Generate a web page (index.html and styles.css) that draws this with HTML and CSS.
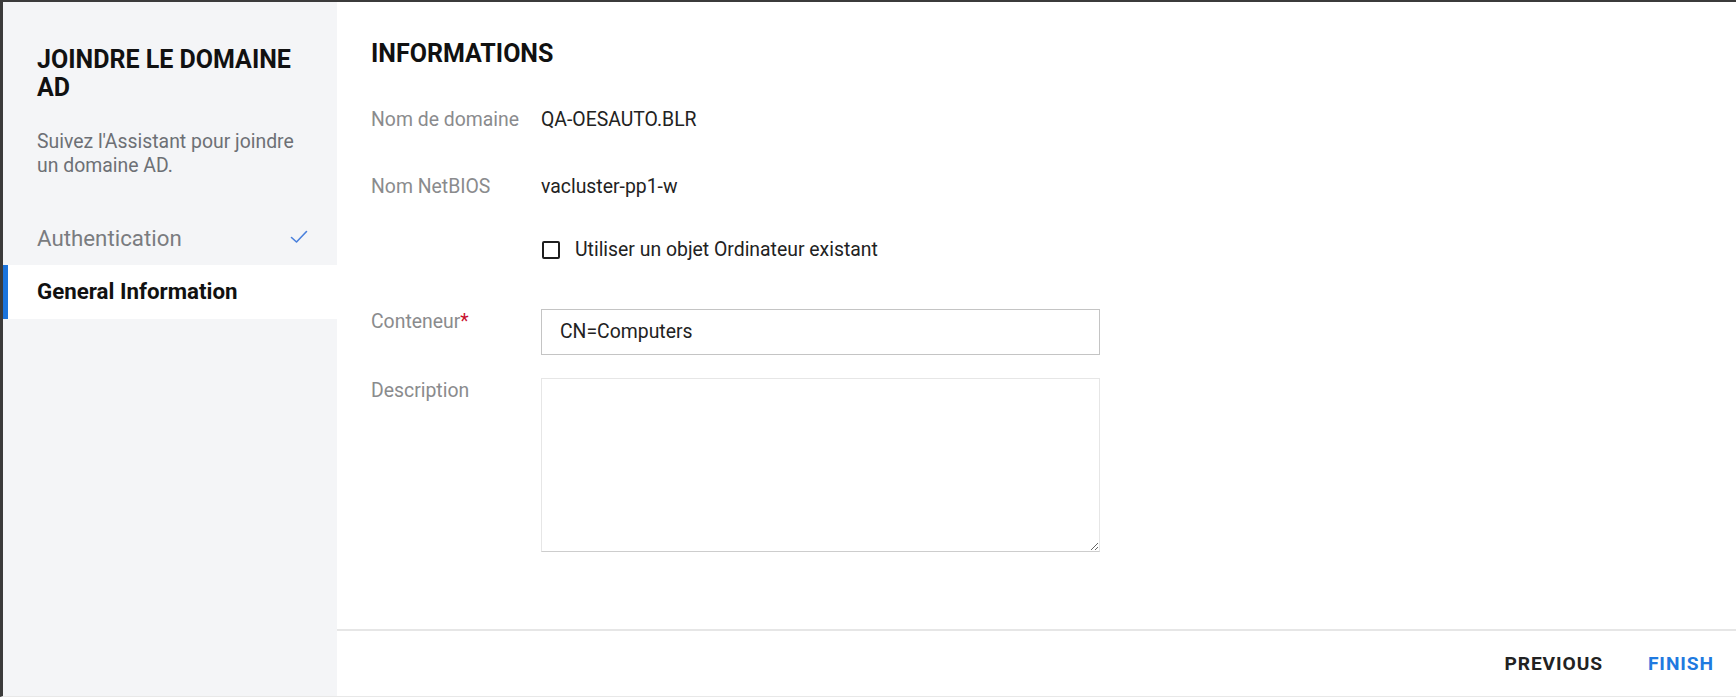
FILE: index.html
```html
<!DOCTYPE html>
<html lang="fr">
<head>
<meta charset="utf-8">
<title>Joindre le domaine AD</title>
<link rel="stylesheet" href="styles.css">
</head>
<body>
<div class="frame">
  <aside class="sidebar">
    <h1 class="side-title">JOINDRE LE DOMAINE AD</h1>
    <p class="side-desc">Suivez l'Assistant pour joindre un domaine AD.</p>
    <ul class="steps">
      <li class="step step-done">
        <span>Authentication</span>
        <svg class="check" width="18" height="14" viewBox="0 0 18 14"><path d="M1.5 7.5 L6.5 12 L16.5 1.5" fill="none" stroke="#4a80dc" stroke-width="1.6" stroke-linecap="round" stroke-linejoin="round"/></svg>
      </li>
      <li class="step step-active"><span>General Information</span></li>
    </ul>
  </aside>
  <main class="main">
    <section class="content">
      <h2 class="heading">INFORMATIONS</h2>
      <div class="row row-domain">
        <span class="label">Nom de domaine</span>
        <span class="value">QA-OESAUTO.BLR</span>
      </div>
      <div class="row row-netbios">
        <span class="label">Nom NetBIOS</span>
        <span class="value">vacluster-pp1-w</span>
      </div>
      <div class="row row-check">
        <span class="label"></span>
        <label class="checkline"><span class="box"></span><span class="value">Utiliser un objet Ordinateur existant</span></label>
      </div>
      <div class="row row-input">
        <span class="label">Conteneur<span class="req">*</span></span>
        <div class="input">CN=Computers</div>
      </div>
      <div class="row row-textarea">
        <span class="label">Description</span>
        <textarea class="textarea"></textarea>
      </div>
    </section>
    <footer class="footer">
      <button class="btn btn-prev">PREVIOUS</button>
      <button class="btn btn-finish">FINISH</button>
    </footer>
  </main>
</div>
</body>
</html>
```
FILE: styles.css
```css
* { box-sizing: border-box; }
html, body { margin: 0; padding: 0; }
body {
  font-family: Roboto, "Liberation Sans", sans-serif;
  font-size: 19.4px;
  color: #222;
  background: #fff;
}
.frame {
  display: flex;
  width: 1736px;
  height: 697px;
  border-top: 2px solid #3b3b3b;
  border-left: 3px solid #3b3b3b;
  border-bottom: 1px solid #e8e8e8;
}
.sidebar {
  width: 334px;
  flex: none;
  background: #f4f5f7;
  padding-top: 44px;
}
.side-title {
  margin: 0;
  padding: 0 30px 0 34px;
  font-size: 25px;
  line-height: 28px;
  font-weight: 700;
  color: #111;
}
.side-desc {
  margin: 28px 0 0;
  padding: 0 37px 0 34px;
  font-size: 19.4px;
  line-height: 24px;
  color: #6d7075;
}
.steps {
  list-style: none;
  margin: 34px 0 0;
  padding: 0;
}
.step {
  height: 53px;
  display: flex;
  align-items: center;
  justify-content: space-between;
  padding: 0 29px 2px 34px;
  font-size: 22.3px;
}
.step-done { color: #7a7c80; }
.check { margin-top: -2px; }
.step-active {
  background: #fff;
  border-left: 5px solid #1b74dc;
  padding-left: 29px;
  font-weight: 700;
  color: #111;
  height: 54px;
}
.main {
  flex: 1;
  display: flex;
  flex-direction: column;
}
.content {
  flex: 1;
  padding: 38px 0 0 34px;
}
.heading {
  margin: 0 0 40px;
  font-size: 25px;
  line-height: 28px;
  font-weight: 700;
  color: #111;
}
.row {
  display: grid;
  grid-template-columns: 170px 559px;
  line-height: 24px;
}
.label { color: #8a8b8d; }
.value { color: #222; }
.req { color: #c8102e; }
.row-domain { margin-bottom: 43px; }
.row-netbios { margin-bottom: 39px; }
.row-check { margin-bottom: 47px; }
.row-input { margin-bottom: 23px; }
.row-input .label, .row-textarea .label { padding-top: 1px; }
.checkline {
  display: flex;
  align-items: center;
  gap: 15px;
  padding-left: 1px;
}
.box {
  width: 18px;
  height: 18px;
  border: 2px solid #1e1e1e;
  border-radius: 2px;
  background: #fff;
}
.input {
  height: 46px;
  border: 1px solid #c4c4c4;
  padding: 0 18px;
  display: flex;
  align-items: center;
  color: #222;
}
.textarea {
  display: block;
  width: 559px;
  height: 174px;
  margin: 0;
  border: 1px solid #e6e6e6;
  border-bottom-color: #cdcdcd;
  border-radius: 0;
  font: inherit;
  resize: both;
  outline: none;
}
.footer {
  height: 67px;
  flex: none;
  border-top: 2px solid #e6e6e6;
  display: flex;
  justify-content: flex-end;
  align-items: center;
  gap: 45px;
  padding: 0 22px 0 0;
}
.btn {
  border: none;
  background: none;
  padding: 0;
  font-family: inherit;
  font-size: 19.2px;
  font-weight: 700;
  letter-spacing: 0.9px;
  line-height: 24px;
  cursor: pointer;
}
.btn-prev { color: #222; }
.btn-finish { color: #1f7ae0; }
```
